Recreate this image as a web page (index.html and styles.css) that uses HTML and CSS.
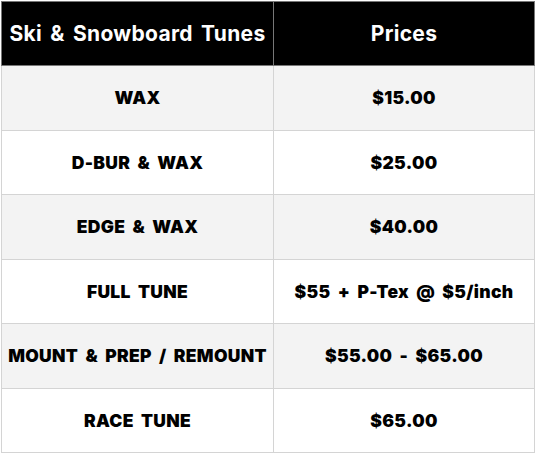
FILE: index.html
```html
<!DOCTYPE html>
<html>
<head>
<meta charset="utf-8">
<link rel="stylesheet" href="styles.css">
</head>
<body>
<table class="prices">
  <thead>
    <tr><th>Ski &amp; Snowboard Tunes</th><th>Prices</th></tr>
  </thead>
  <tbody>
    <tr class="alt"><td>WAX</td><td>$15.00</td></tr>
    <tr><td>D-BUR &amp; WAX</td><td>$25.00</td></tr>
    <tr class="alt"><td>EDGE &amp; WAX</td><td>$40.00</td></tr>
    <tr><td>FULL TUNE</td><td>$55 + P-Tex @ $5/inch</td></tr>
    <tr class="alt"><td>MOUNT &amp; PREP / REMOUNT</td><td>$55.00 - $65.00</td></tr>
    <tr><td>RACE TUNE</td><td>$65.00</td></tr>
  </tbody>
</table>
</body>
</html>
```
FILE: styles.css
```css
html, body { margin: 0; padding: 0; background: #fff; }
body { padding: 1px 0 0 1px; }
.prices {
  border-collapse: collapse;
  width: 534px;
  height: 452px;
  font-family: Inter, "Liberation Sans", sans-serif;
  font-weight: 900;
  color: #000;
  table-layout: fixed;
}
.prices th, .prices td {
  border: 1px solid #d4d4d4;
  text-align: center;
  vertical-align: middle;
  padding: 0;
  white-space: nowrap;
}
.prices th {
  background: #000;
  color: #fff;
  font-size: 21px;
  letter-spacing: 0.3px;
  word-spacing: 3px;
  border-color: #777;
  height: 63px;
}
.prices td {
  font-size: 17.5px;
  letter-spacing: 0.3px;
  word-spacing: 3.5px;
  height: 63px;
}
.prices tr.alt td { background: #f3f3f3; }
.prices th:first-child, .prices td:first-child { width: 271px; }
```
